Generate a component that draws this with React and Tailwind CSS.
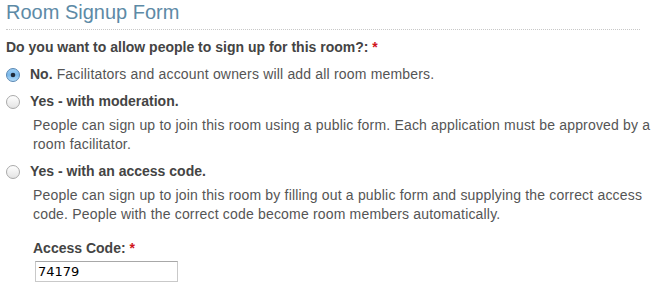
import React from "react";

function Radio({ checked }) {
  return (
    <svg width="14" height="14" viewBox="0 0 14 14" className="shrink-0">
      <defs>
        <linearGradient id={checked ? "rc" : "ru"} x1="0" y1="0" x2="0" y2="1">
          {checked ? (
            <>
              <stop offset="0" stopColor="#9fd0f5" />
              <stop offset="0.5" stopColor="#7ab8ea" />
              <stop offset="1" stopColor="#b9e0fb" />
            </>
          ) : (
            <>
              <stop offset="0" stopColor="#ffffff" />
              <stop offset="0.5" stopColor="#f1f1f1" />
              <stop offset="1" stopColor="#e2e2e2" />
            </>
          )}
        </linearGradient>
      </defs>
      <circle
        cx="7"
        cy="7"
        r="6.5"
        fill={`url(#${checked ? "rc" : "ru"})`}
        stroke={checked ? "#5b88b3" : "#a9a9a9"}
        strokeWidth="1"
      />
      {checked && <circle cx="7" cy="7" r="2.3" fill="#1f2b3a" />}
    </svg>
  );
}

export default function App() {
  return (
    <div
      className="w-[662px] h-[290px] bg-white overflow-hidden pl-[6px] pr-[8px] text-[14px] leading-[19px] text-[#555]"
      style={{ fontFamily: '"Liberation Sans", Arial, sans-serif' }}
    >
      <h2 className="text-[20px] leading-[24px] text-[#5d8aa6] font-normal">
        Room Signup Form
      </h2>
      <div className="mt-[5px] w-[634px] border-b border-dotted border-[#c8c8c8]" />
      <div className="mt-[8px] font-bold text-[#444]">
        Do you want to allow people to sign up for this room?:{" "}
        <span className="text-[#d0141b]">*</span>
      </div>
      <div className="mt-[8px] flex items-center gap-[10px] tracking-[0.18px]">
        <Radio checked />
        <div>
          <span className="font-bold text-[#444] tracking-normal">No.</span>{" "}
          Facilitators and account owners will add all room members.
        </div>
      </div>
      <div className="mt-[8px] flex items-center gap-[10px]">
        <Radio />
        <div className="font-bold text-[#444]">Yes - with moderation.</div>
      </div>
      <div className="mt-[5px] pl-[27px] tracking-[0.18px]">
        People can sign up to join this room using a public form. Each
        application must be approved by a room facilitator.
      </div>
      <div className="mt-[8px] flex items-center gap-[10px]">
        <Radio />
        <div className="font-bold text-[#444]">Yes - with an access code.</div>
      </div>
      <div className="mt-[5px] pl-[27px] tracking-[0.18px]">
        People can sign up to join this room by filling out a public form and
        supplying the correct access code. People with the correct code become
        room members automatically.
      </div>
      <div className="mt-[15px] pl-[27px] font-bold text-[#444]">
        Access Code: <span className="text-[#d0141b]">*</span>
      </div>
      <div className="pl-[29px] mt-[3px]">
        <input
          type="text"
          defaultValue="74179"
          className="w-[143px] h-[21px] border border-[#c9c9c9] border-t-[#a8a8a8] px-[2px] text-[13px] text-black outline-none"
          style={{ fontFamily: '"DejaVu Sans", sans-serif' }}
        />
      </div>
    </div>
  );
}
